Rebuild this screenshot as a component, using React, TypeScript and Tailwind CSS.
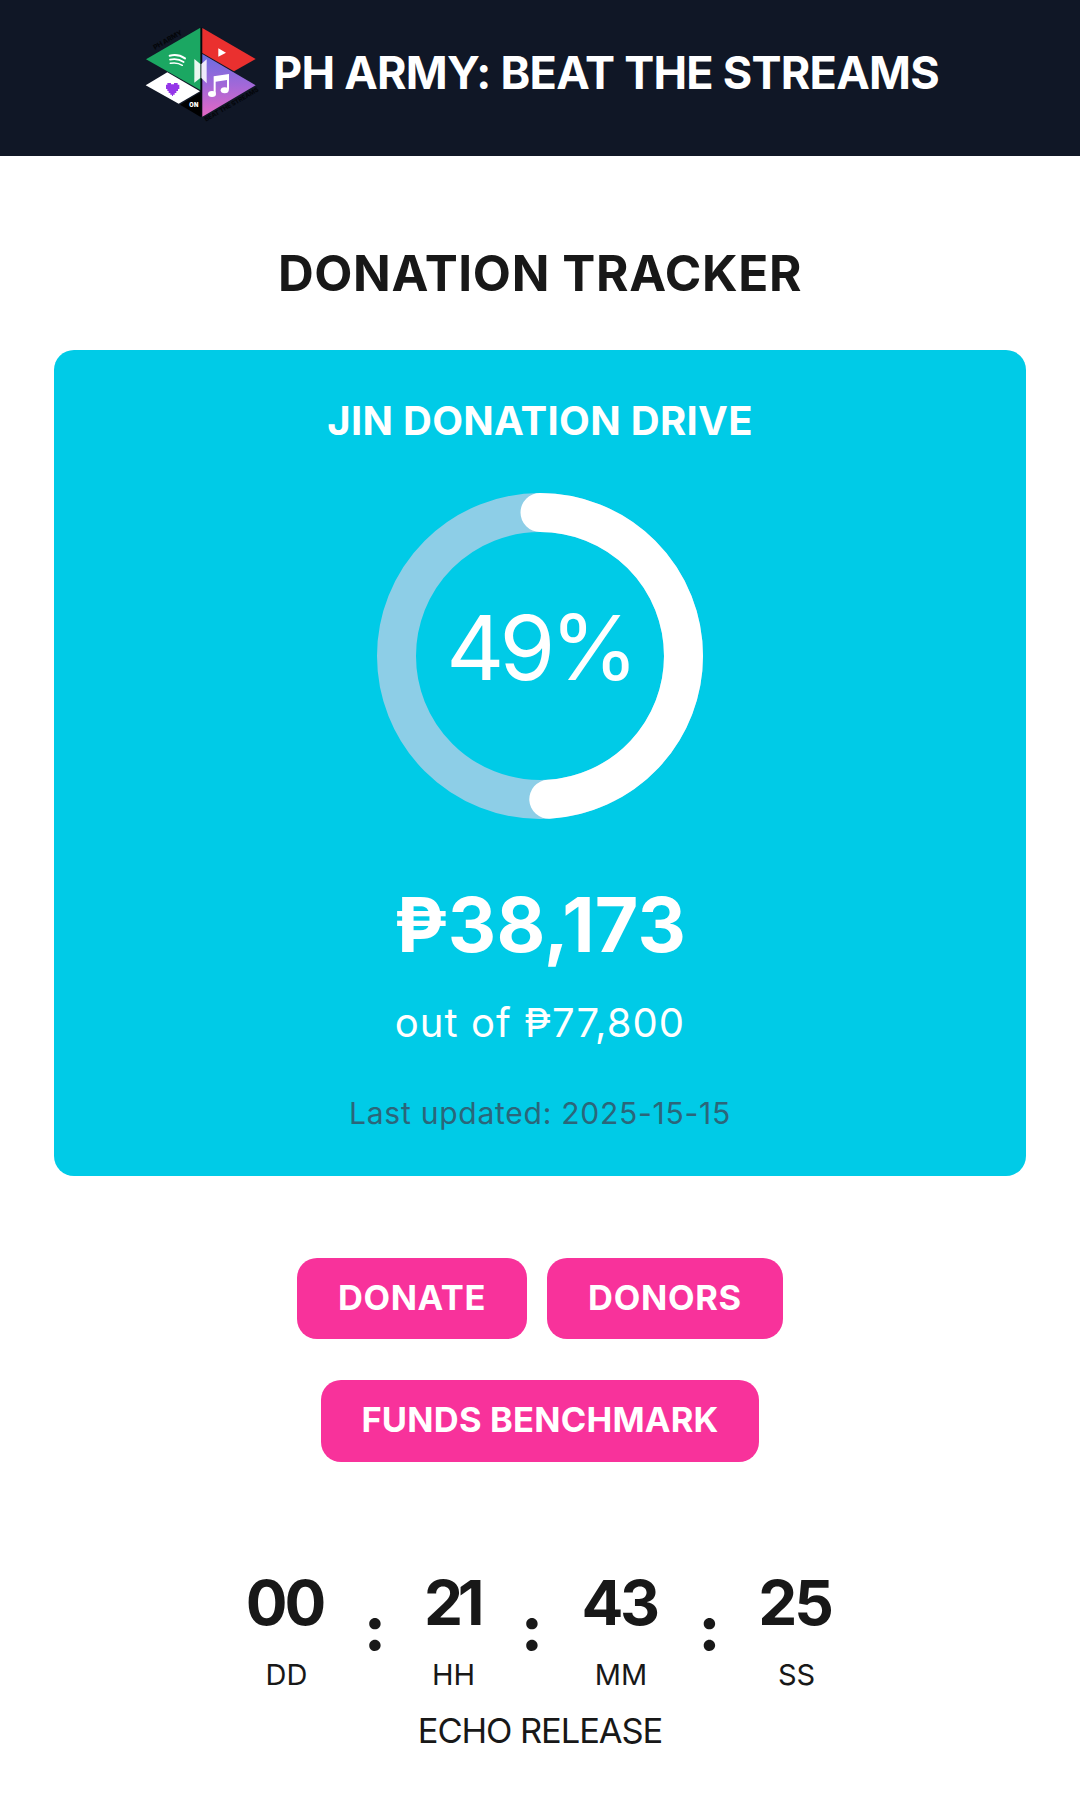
import { Fragment } from "react";

const countdown = [
  { value: "00", label: "DD", className: "w-[100px] tracking-[-3px]" },
  { value: "21", label: "HH", className: "w-[78px] tracking-[-5.5px]" },
  { value: "43", label: "MM", className: "w-[97px] tracking-[-3.5px]" },
  { value: "25", label: "SS", className: "w-[92px] tracking-[-3px]" },
];

const colonWidths = ["w-[78px]", "w-[80px]", "w-[81px]"];

const Logo = () => (
  <svg viewBox="36 42 360 300" className="w-[120px] h-[100px] shrink-0">
    <defs>
      <linearGradient id="music" x1="0" y1="0" x2="0" y2="1">
        <stop offset="0" stopColor="#6a6de0" />
        <stop offset="0.5" stopColor="#a268d8" />
        <stop offset="1" stopColor="#e667c4" />
      </linearGradient>
    </defs>
    <path d="M211 53V320H217V53Z" fill="#05070b" />
    <path d="M211 53V240L48 148Z" fill="#1ba762" />
    <path d="M217 54L377 147L312 184L217 129Z" fill="#ea302f" />
    <path d="M217 132L377 226L217 320Z" fill="url(#music)" />
    <path d="M112 187L210 244L146 281L47 226Z" fill="#fff" />
    <path d="M212 247V321L150 284Z" fill="#000" />
    {/* spotify waves */}
    <g stroke="#fff" fill="none" strokeLinecap="round">
      <path d="M119 137Q144 131 165 145" strokeWidth="6" />
      <path d="M120 149Q143 144 161 156" strokeWidth="5" />
      <path d="M121 160Q142 156 157 166" strokeWidth="4.5" />
    </g>
    {/* play */}
    <path d="M265 115L288 128L265 140Z" fill="#fff" />
    {/* army / bts doors */}
    <path d="M193 147L211 162V204L193 218Z" fill="#e9f7ef" />
    <path d="M214 162L230 148V220L214 204Z" fill="#efeafb" />
    {/* music note */}
    <g fill="#fff">
      <path d="M251 199L297 192V239H291V210L257 215V250H251Z" />
      <ellipse cx="246" cy="252" rx="12" ry="9" />
      <ellipse cx="284" cy="241" rx="12" ry="9" />
    </g>
    {/* pixel heart */}
    <path
      d="M112 219H123V223H132V219H143V224H148V237H144V243H139V249H134V254H129V258H126V254H121V249H116V243H112V237H108V224H112Z"
      fill="#9436e8"
    />
    <text x="178" y="291" fontSize="17" textLength="27" className="font-['Inter'] font-black fill-white">
      ON
    </text>
    <text
      transform="translate(75 120) rotate(-30)"
      fontSize="21"
      textLength="96"
      className="font-['Inter'] font-extrabold fill-[#04060a]"
    >
      PH ARMY
    </text>
    <text
      transform="translate(228 335) rotate(-30)"
      fontSize="19"
      textLength="184"
      className="font-['Inter'] font-extrabold fill-[#04060a]"
    >
      BEAT THE STREAMS
    </text>
  </svg>
);

const ProgressRing = ({ percent }: { percent: number }) => {
  const circumference = 2 * Math.PI * 143.5;
  return (
    <div className="grid place-items-center size-[326px]">
      <svg viewBox="0 0 326 326" className="col-start-1 row-start-1 size-[326px] -rotate-90">
        <circle cx="163" cy="163" r="143.5" fill="none" stroke="#8dcee7" strokeWidth="39" />
        <circle
          cx="163"
          cy="163"
          r="143.5"
          fill="none"
          stroke="#fff"
          strokeWidth="39"
          strokeLinecap="round"
          strokeDasharray={`${(circumference * percent) / 100} ${circumference}`}
        />
      </svg>
      <span className="col-start-1 row-start-1 pb-4 text-[90px] leading-[100px] tracking-[-5px]">
        {percent}%
      </span>
    </div>
  );
};

export default function App() {
  return (
    <div className="min-h-[1803px] bg-white text-[#181818] font-['Inter',sans-serif]">
      {/* Header */}
      <header className="flex items-start gap-[11px] h-[156px] pt-6 pl-[142px] bg-[#101726]">
        <Logo />
        <h1 className="text-[45px] leading-[98px] tracking-[-0.75px] font-bold text-white whitespace-nowrap">
          PH ARMY: BEAT THE STREAMS
        </h1>
      </header>

      <main className="flex flex-col items-center pt-[87px] px-[54px]">
        <h2 className="text-[49.5px] leading-[60px] tracking-[0.64px] font-bold">
          DONATION TRACKER
        </h2>

        {/* Tracker card */}
        <section className="flex flex-col items-center w-full h-[826px] mt-[47px] pt-[41px] rounded-[20px] bg-[#00cbe7] text-white">
          <h3 className="mb-[42px] text-[40px] leading-[60px] tracking-[0.29px] font-bold">
            JIN DONATION DRIVE
          </h3>
          <ProgressRing percent={49} />
          <p className="mt-[61px] text-[75px] leading-[90px] tracking-[0.2px] font-bold">
            ₱38,173
          </p>
          <p className="mt-[23px] text-[40px] leading-[60px] tracking-[1.06px]">
            out of ₱77,800
          </p>
          <p className="mt-10 text-[30px] leading-10 tracking-[0.75px] text-[#2b667a]">
            Last updated: 2025-15-15
          </p>
        </section>

        {/* Actions */}
        <div className="flex gap-5 mt-[82px] text-[34.5px] font-bold text-white">
          <button className="w-[230px] h-[81px] pb-0.5 rounded-[20px] bg-[#f8329b] tracking-[0.6px]">
            DONATE
          </button>
          <button className="w-[236px] h-[81px] pb-0.5 rounded-[20px] bg-[#f8329b] tracking-[0.7px]">
            DONORS
          </button>
        </div>
        <button className="w-[438px] h-[82px] mt-[41px] pb-0.5 rounded-[20px] bg-[#f8329b] text-[34.5px] tracking-[0.2px] font-bold text-white">
          FUNDS BENCHMARK
        </button>

        {/* Countdown */}
        <div className="flex justify-center mt-[106px] -ml-0.5">
          {countdown.map((unit, i) => (
            <Fragment key={unit.label}>
              {i > 0 && (
                <span
                  className={`${colonWidths[i - 1]} mt-[25px] text-center text-[62px] leading-[70px] font-extrabold`}
                >
                  :
                </span>
              )}
              <div className="flex flex-col items-center">
                <span
                  className={`${unit.className} pr-[3px] text-center text-[62px] leading-[70px] font-bold`}
                >
                  {unit.value}
                </span>
                <span className="mt-[22px] pl-px text-[29px] leading-[30px]">
                  {unit.label}
                </span>
              </div>
            </Fragment>
          ))}
        </div>
        <p className="mt-[21px] text-[34.5px] leading-10 tracking-[-1.1px]">
          ECHO RELEASE
        </p>
      </main>
    </div>
  );
}
